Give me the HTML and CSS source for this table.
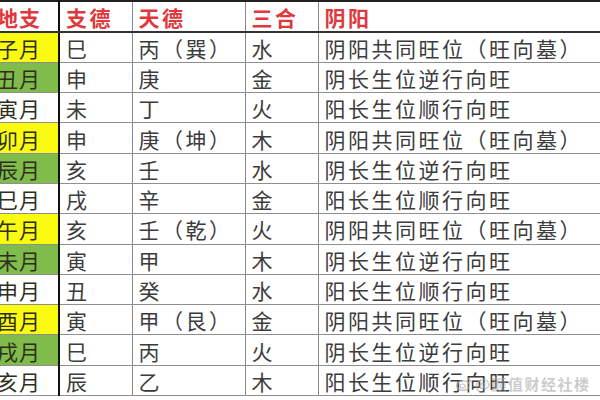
FILE: index.html
```html
<!DOCTYPE html>
<html lang="zh-CN">
<head>
<meta charset="utf-8">
<link rel="stylesheet" href="styles.css">
</head>
<body>
<div class="sheet">
<table class="grid">
  <colgroup>
    <col class="c1"><col class="c2"><col class="c3"><col class="c4"><col class="c5">
  </colgroup>
  <thead>
    <tr class="head"><th class="first">地支</th><th>支德</th><th>天德</th><th>三合</th><th>阴阳</th></tr>
  </thead>
  <tbody>
    <tr><td class="first yellow">子月</td><td>巳</td><td>丙（巽）</td><td>水</td><td>阴阳共同旺位（旺向墓）</td></tr>
    <tr><td class="first green">丑月</td><td>申</td><td>庚</td><td>金</td><td>阴长生位逆行向旺</td></tr>
    <tr><td class="first">寅月</td><td>未</td><td>丁</td><td>火</td><td>阳长生位顺行向旺</td></tr>
    <tr><td class="first yellow">卯月</td><td>申</td><td>庚（坤）</td><td>木</td><td>阴阳共同旺位（旺向墓）</td></tr>
    <tr><td class="first green">辰月</td><td>亥</td><td>壬</td><td>水</td><td>阴长生位逆行向旺</td></tr>
    <tr><td class="first">巳月</td><td>戌</td><td>辛</td><td>金</td><td>阳长生位顺行向旺</td></tr>
    <tr><td class="first yellow">午月</td><td>亥</td><td>壬（乾）</td><td>火</td><td>阴阳共同旺位（旺向墓）</td></tr>
    <tr><td class="first green">未月</td><td>寅</td><td>甲</td><td>木</td><td>阴长生位逆行向旺</td></tr>
    <tr><td class="first">申月</td><td>丑</td><td>癸</td><td>水</td><td>阳长生位顺行向旺</td></tr>
    <tr><td class="first yellow">酉月</td><td>寅</td><td>甲（艮）</td><td>金</td><td>阴阳共同旺位（旺向墓）</td></tr>
    <tr><td class="first green">戌月</td><td>巳</td><td>丙</td><td>火</td><td>阴长生位逆行向旺</td></tr>
    <tr><td class="first">亥月</td><td>辰</td><td>乙</td><td>木</td><td>阳长生位顺行向旺</td></tr>
  </tbody>
</table>
<div class="watermark">
  <svg class="wb" width="16" height="14" viewBox="0 0 16 14">
    <ellipse cx="7" cy="8.5" rx="6.5" ry="4.8" fill="none" stroke="#b0b0b0" stroke-width="1.4"/>
    <ellipse cx="6.5" cy="9" rx="2.6" ry="2" fill="none" stroke="#b0b0b0" stroke-width="1.2"/>
    <path d="M11 1.5 A4 4 0 0 1 15 5.5" fill="none" stroke="#b0b0b0" stroke-width="1.3"/>
  </svg>
  <span class="wm-text">@颜值财经社楼</span>
</div>
</div>
</body>
</html>
```

FILE: styles.css
```css
html, body {
  margin: 0;
  padding: 0;
  background: #ffffff;
}

.sheet {
  position: relative;
  width: 600px;
  height: 400px;
  overflow: hidden;
  background: #ffffff;
}

.grid {
  width: 600px;
  table-layout: fixed;
  border-collapse: collapse;
  font-family: "Noto Sans CJK SC", "Noto Sans CJK JP", sans-serif;
  font-size: 21px;
  letter-spacing: 2.5px;
  text-spacing-trim: space-all;
  font-feature-settings: "fwid" 1;
  color: #3c3c3c;
  border-top: 2px solid #222222;
}

.c1 { width: 59px; }
.c2 { width: 73px; }
.c3 { width: 113px; }
.c4 { width: 73px; }
.c5 { width: 282px; }

.grid th,
.grid td {
  padding: 2px 0 0 6px;
  text-align: left;
  white-space: nowrap;
  overflow: hidden;
  border-right: 1.5px solid #8a8a8a;
  border-bottom: 1.5px solid #8f8f8f;
  line-height: 1;
  vertical-align: middle;
}

.grid td:last-child,
.grid th:last-child {
  border-right: none;
}

.head th {
  height: 27px;
  color: #e0383c;
  font-weight: 700;
  border-bottom: 2px solid #333333;
}

.grid tbody tr {
  height: 30.3px;
}

.grid .first {
  padding-left: 0;
  text-indent: -3px;
  letter-spacing: 1px;
  border-right: 2.5px solid #111111;
  color: #2e2e1a;
}

.head .first {
  color: #e0383c;
}

.yellow { background: #fbfb12; }
.green { background: #7fbc4c; }

.watermark {
  position: absolute;
  left: 456px;
  top: 373px;
  display: flex;
  align-items: center;
  gap: 3px;
  opacity: 0.7;
}

.wm-text {
  font-family: "Noto Sans CJK SC", sans-serif;
  font-size: 15px;
  font-weight: 700;
  letter-spacing: 1.5px;
  color: rgba(170, 170, 170, 0.85);
}
```
